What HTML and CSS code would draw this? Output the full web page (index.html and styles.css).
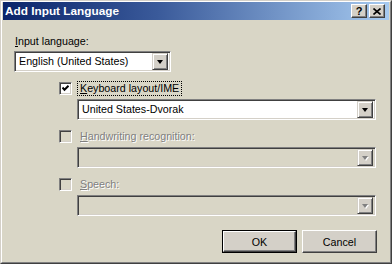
FILE: index.html
```html
<!DOCTYPE html>
<html lang="en">
  <head>
    <meta charset="UTF-8" />
    <title>Add Input Language</title>
    <link rel="stylesheet" href="styles.css">
  </head>
  <body>
    <div class="window">
      <div class="frame">
        <div class="titlebar">
          <span class="title">Add Input Language</span>
          <div class="caption-btn help">?</div>
          <div class="caption-btn close">
            <svg width="8" height="7" viewBox="0 0 8 7">
              <path d="M0.5 0.5 L7.5 6.5 M7.5 0.5 L0.5 6.5" stroke="#000" stroke-width="1.6" />
            </svg>
          </div>
        </div>

        <div class="content">
          <div class="label"><u>I</u>nput language:</div>
          <div class="combo lang">
            <div class="combo-text">English (United States)</div>
            <div class="drop"><span class="arrow"></span></div>
          </div>

          <div class="group">
            <div class="check-row">
              <div class="checkbox checked">
                <svg width="7" height="7" viewBox="0 0 7 7">
                  <path d="M0.5 2.5 L2.5 4.8 L6.5 0.8" fill="none" stroke="#000" stroke-width="2" />
                </svg>
              </div>
              <span class="check-label focus"><u>K</u>eyboard layout/IME</span>
            </div>
            <div class="combo wide">
              <div class="combo-text">United States-Dvorak</div>
              <div class="drop"><span class="arrow"></span></div>
            </div>
          </div>

          <div class="group">
            <div class="check-row">
              <div class="checkbox disabled"></div>
              <span class="check-label muted"><u>H</u>andwriting recognition:</span>
            </div>
            <div class="combo wide disabled">
              <div class="combo-text"></div>
              <div class="drop"><span class="arrow"></span></div>
            </div>
          </div>

          <div class="group">
            <div class="check-row">
              <div class="checkbox disabled"></div>
              <span class="check-label muted"><u>S</u>peech:</span>
            </div>
            <div class="combo wide disabled">
              <div class="combo-text"></div>
              <div class="drop"><span class="arrow"></span></div>
            </div>
          </div>

          <div class="buttons">
            <div class="btn default"><div class="btn-inner">OK</div></div>
            <div class="btn"><div class="btn-inner">Cancel</div></div>
          </div>
        </div>
      </div>
    </div>
  </body>
</html>
```

FILE: styles.css
```css
body {
  margin: 0;
  font-family: "Liberation Sans", Arial, sans-serif;
  font-size: 10.7px;
  color: #000;
}

.window {
  width: 392px;
  height: 264px;
  box-sizing: border-box;
  background: #d9d6c6;
  border: 1px solid;
  border-color: #d4d0c8 #404040 #404040 #d4d0c8;
}

.frame {
  height: 100%;
  box-sizing: border-box;
  border: 1px solid;
  border-color: #fff #808080 #808080 #fff;
  padding: 0 1px 1px 1px;
}

.titlebar {
  height: 18px;
  display: flex;
  align-items: center;
  padding: 0 4px 0 2px;
  background: linear-gradient(to right, #0a246a 0%, #3a5a9a 40%, #a6caf0 100%);
}

.title {
  flex: 1;
  color: #fff;
  font-weight: bold;
  font-size: 11.8px;
}

.caption-btn {
  width: 16px;
  height: 14px;
  box-sizing: border-box;
  background: #d4d0c8;
  border: 1px solid;
  border-color: #fff #404040 #404040 #fff;
  box-shadow: inset -1px -1px #808080;
  display: flex;
  justify-content: center;
  align-items: center;
  font-weight: bold;
  font-size: 11px;
  line-height: 1;
}

.help {
  margin-right: 2px;
}

.content {
  padding: 15px 0 0 11px;
}

.label {
  line-height: 13px;
  margin-left: 1px;
}

.combo {
  display: flex;
  box-sizing: border-box;
  height: 21px;
  background: #fff;
  border: 1px solid;
  border-color: #808080 #fff #fff #808080;
  box-shadow: inset 1px 1px #404040, inset -1px -1px #d4d0c8;
  padding: 2px;
}

.combo.lang {
  width: 157px;
  margin-top: 3px;
}

.combo.wide {
  width: 299px;
  margin-left: 63px;
  margin-top: 3px;
}

.combo.disabled {
  background: #d9d6c6;
}

.combo-text {
  flex: 1;
  line-height: 15px;
  padding-left: 2px;
}

.drop {
  width: 16px;
  height: 17px;
  margin: -1px 0;
  box-sizing: border-box;
  background: #d4d0c8;
  border: 1px solid;
  border-color: #d4d0c8 #404040 #404040 #d4d0c8;
  box-shadow: inset 1px 1px #fff, inset -1px -1px #808080;
  display: flex;
  justify-content: center;
  align-items: center;
}

.arrow {
  width: 0;
  height: 0;
  border-left: 3.5px solid transparent;
  border-right: 3.5px solid transparent;
  border-top: 4px solid #000;
  margin-top: 1px;
}

.combo.disabled .arrow {
  border-top-color: #808080;
  filter: drop-shadow(1px 1px 0 #fff);
}

.group {
  margin-top: 9px;
}

.check-row {
  display: flex;
  align-items: center;
  height: 15px;
  margin-left: 45px;
}

.checkbox {
  width: 13px;
  height: 13px;
  box-sizing: border-box;
  background: #fff;
  border: 1px solid;
  border-color: #808080 #fff #fff #808080;
  box-shadow: inset 1px 1px #404040, inset -1px -1px #d4d0c8;
  display: flex;
  justify-content: center;
  align-items: center;
  margin-right: 5px;
}

.checkbox.disabled {
  background: #d9d6c6;
}

.check-label {
  padding: 0 2px;
  line-height: 13px;
  border: 1px solid transparent;
}

.check-label.focus {
  border: 1px dotted #000;
}

.muted {
  color: #808080;
  text-shadow: 1px 1px 0 #fff;
}

.buttons {
  display: flex;
  justify-content: flex-end;
  gap: 5px;
  margin-top: 14px;
  width: 363px;
}

.btn {
  width: 75px;
  height: 23px;
  box-sizing: border-box;
  background: #d4d0c8;
  border: 1px solid;
  border-color: #fff #404040 #404040 #fff;
  box-shadow: inset -1px -1px #808080;
}

.btn.default {
  border: 1px solid #000;
  box-shadow: none;
}

.btn-inner {
  height: 100%;
  box-sizing: border-box;
  display: flex;
  justify-content: center;
  align-items: center;
}

.btn.default .btn-inner {
  border: 1px solid;
  border-color: #fff #404040 #404040 #fff;
  box-shadow: inset -1px -1px #808080;
}
```
